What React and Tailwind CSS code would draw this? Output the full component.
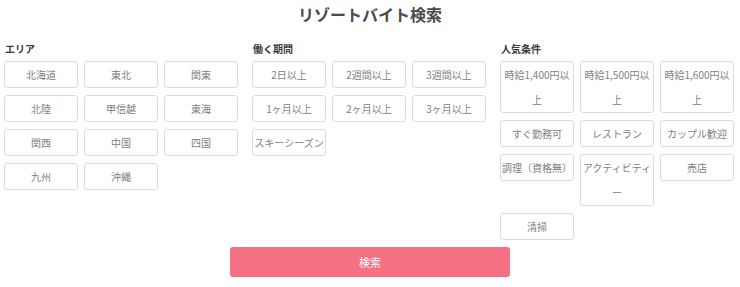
import { useState } from "react";

const areas = ["北海道", "東北", "関東", "北陸", "甲信越", "東海", "関西", "中国", "四国", "九州", "沖縄"];
const periods = ["2日以上", "2週間以上", "3週間以上", "1ヶ月以上", "2ヶ月以上", "3ヶ月以上", "スキーシーズン"];
const popular = [
  "時給1,400円以上",
  "時給1,500円以上",
  "時給1,600円以上",
  "すぐ勤務可",
  "レストラン",
  "カップル歓迎",
  "調理（資格無）",
  "アクティビティー",
  "売店",
  "清掃",
];

function Group({ title, items, selected, toggle }) {
  return (
    <div>
      <p className="text-[10px] leading-[14px] font-bold text-[#3a3a3a] mb-[5px] pl-[1px]">{title}</p>
      <div className="flex flex-wrap items-start gap-x-[6px] gap-y-[7px]">
        {items.map((item) => (
          <button
            key={item}
            onClick={() => toggle(item)}
            className={`w-[74px] border rounded-[3px] text-[10px] leading-[25px] text-center break-all ${
              selected.includes(item)
                ? "border-[#f57083] text-[#f57083] bg-[#fff5f6]"
                : "border-[#dcdcdc] text-[#808080] bg-white"
            }`}
          >
            {item}
          </button>
        ))}
      </div>
    </div>
  );
}

export default function App() {
  const [selected, setSelected] = useState([]);

  const toggle = (item) => {
    setSelected((prev) => (prev.includes(item) ? prev.filter((i) => i !== item) : [...prev, item]));
  };

  return (
    <div
      className="w-[740px] bg-white pb-[10px]"
      style={{ fontFamily: '"Noto Sans CJK JP", "Noto Sans", sans-serif' }}
    >
      {/* Title */}
      <h1 className="pt-[5px] text-center text-[16px] leading-[18px] font-bold text-[#4a4a4a]">
        リゾートバイト検索
      </h1>

      {/* Conditions */}
      <div className="grid grid-cols-[248px_248px_236px] pl-[4px] mt-[19px]">
        <Group title="エリア" items={areas} selected={selected} toggle={toggle} />
        <Group title="働く期間" items={periods} selected={selected} toggle={toggle} />
        <Group title="人気条件" items={popular} selected={selected} toggle={toggle} />
      </div>

      {/* Search */}
      <div className="flex justify-center mt-[7px]">
        <button className="w-[280px] h-[30px] rounded-[3px] bg-[#f57083] text-white text-[11px]">検索</button>
      </div>
    </div>
  );
}
